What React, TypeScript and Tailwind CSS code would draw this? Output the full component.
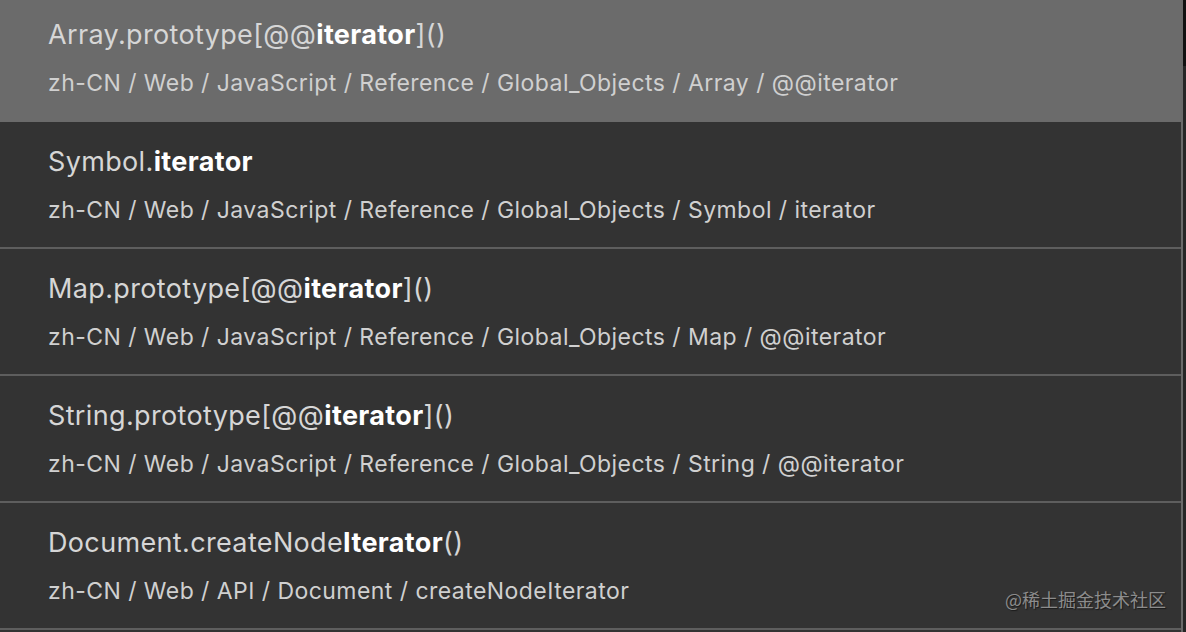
import React from "react";

type Item = { pre: string; bold: string; post: string; path: string };

const items: Item[] = [
  { pre: "Array.prototype[@@", bold: "iterator", post: "]()", path: "zh-CN / Web / JavaScript / Reference / Global_Objects / Array / @@iterator" },
  { pre: "Symbol.", bold: "iterator", post: "", path: "zh-CN / Web / JavaScript / Reference / Global_Objects / Symbol / iterator" },
  { pre: "Map.prototype[@@", bold: "iterator", post: "]()", path: "zh-CN / Web / JavaScript / Reference / Global_Objects / Map / @@iterator" },
  { pre: "String.prototype[@@", bold: "iterator", post: "]()", path: "zh-CN / Web / JavaScript / Reference / Global_Objects / String / @@iterator" },
  { pre: "Document.createNode", bold: "Iterator", post: "()", path: "zh-CN / Web / API / Document / createNodeIterator" },
];

export default function App() {
  return (
    <div
      className="relative flex h-[632px] w-[1186px] overflow-hidden bg-[#262626]"
      style={{ fontFamily: "Inter, 'Noto Sans', sans-serif" }}
    >
      <div className="flex w-[1183px] shrink-0 flex-col border-r-2 border-[#6a6a6a] bg-[#333333]">
        {items.map((it, i) => (
          <div
            key={i}
            className={
              i === 0
                ? "h-[122px] shrink-0 bg-[#6b6b6b] pl-[48px] pt-[19px]"
                : "h-[127px] shrink-0 border-b-2 border-[#5e5e5e] pl-[48px] pt-[24px]"
            }
          >
            <div className="text-[27px] leading-[32px] tracking-[0.35px] text-[#d6d6d6]">
              {it.pre}
              <span className="font-bold text-white">{it.bold}</span>
              {it.post}
            </div>
            <div className="mt-[16px] text-[23px] leading-[32px] tracking-[0.45px] text-[#d0d0d0]">{it.path}</div>
          </div>
        ))}
      </div>
      <div className="flex flex-1 flex-col">
        <div className="h-[66px] bg-[#111111]" />
        <div className="flex-1 bg-[#262626]" />
      </div>
      <div
        className="absolute left-[1005px] top-[587px] text-[18px] leading-[24px] text-[#8c8c8c]"
        style={{ fontFamily: "'Noto Sans CJK SC', sans-serif", textShadow: "1px 1px 1px #1a1a1a" }}
      >
        @稀土掘金技术社区
      </div>
    </div>
  );
}
